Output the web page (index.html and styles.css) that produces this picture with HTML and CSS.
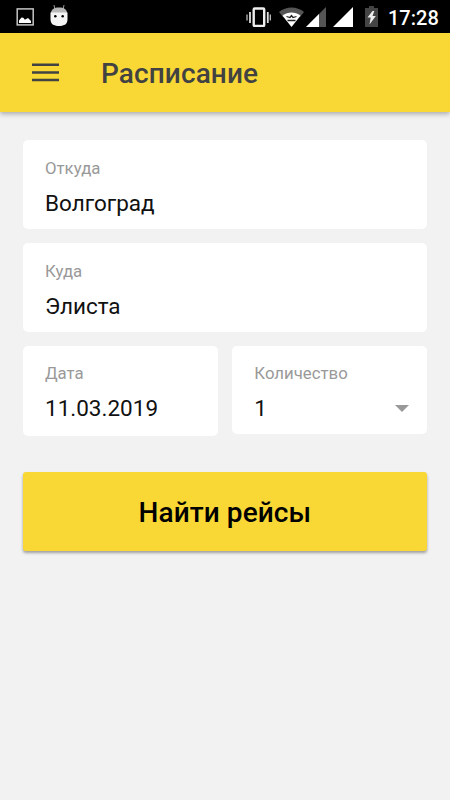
FILE: index.html
```html
<!DOCTYPE html>
<html lang="ru">
<head>
<meta charset="utf-8">
<title>Расписание</title>
<link rel="stylesheet" href="styles.css">
</head>
<body>
<div class="status">
  <div class="status-left">
    <svg width="18" height="18" viewBox="0 0 18 18"><rect x="1.200" y=".9" width="16" height="16" fill="none" stroke="#c4c4c4" stroke-width="1.500"/><path d="M3 15v-2.500l2.500-3 1.800.2 1.600 2 3.100-1.600 3 3V15z" fill="#fff"/></svg>
    <svg width="18" height="22" viewBox="0 0 18 22"><path d="M4.800 4 4 0M13.200 4 14 0" stroke="#999" stroke-width="1"/><path d="M1 8c0-3.500 3-5.500 8-5.500S17 4.500 17 8z" fill="#b8b8b8"/><path d="M.5 7.500h17V14c0 5-3 7-8.500 7S.5 19 .5 14z" fill="#f5f5f5"/><circle cx="5.300" cy="11.300" r="1.250"/><circle cx="12.700" cy="11.300" r="1.250"/></svg>
  </div>
  <div class="status-right">
    <svg class="vibrate" width="26" height="20" viewBox="0 0 26 20"><rect x="8.700" y="1.500" width="10.500" height="17.500" rx="1" fill="none" stroke="#eee" stroke-width="2.400"/><path d="M5 5v11M22.800 5v11" stroke="#ddd" stroke-width="1.800"/><path d="M2 7.500v6M25.300 7.500v6" stroke="#bbb" stroke-width="1.300"/></svg>
    <svg class="wifi" width="26" height="20" viewBox="0 0 26 20"><path d="M0 5C7-1 18-1 25 5L21 10C16 6 9 6 4 10z" fill="#555"/><path d="M3.500 8.800C9 4.500 16 4.500 21.500 8.800L12.500 20z" fill="#fff"/><path d="M7.500 9.500 11 10.500 12.500 8.500l1.500 2 3.500-1M8.500 13.500h8" stroke="#222" stroke-width="1.300" fill="none"/></svg>
    <svg class="signal" width="20" height="20" viewBox="0 0 20 20"><path d="M0 20 20 0v20z" fill="#555"/><path d="M0 20 13 7v13z" fill="#fff"/></svg>
    <svg class="signal-full" width="20" height="20" viewBox="0 0 20 20"><path d="M0 20 20 0v20z" fill="#fff"/></svg>
    <svg class="battery" width="13" height="21" viewBox="0 0 13 21"><path d="M4 0h5v2h4v19H0V2h4z" fill="#444"/><path d="M7.500 5 2.500 11.500h3.200L4.500 18.500 10.800 10H7.500l1.800-5z" fill="#eee"/></svg>
    <span class="clock">17:28</span>
  </div>
</div>
<header class="appbar">
  <svg width="28" height="20" viewBox="0 0 28 20"><path d="M0 1.750h27M0 9.500h27M0 17h27" stroke="#424242" stroke-width="2.600"/></svg>
  <h1>Расписание</h1>
</header>
<main>
  <div class="field"><span class="label">Откуда</span><span class="value">Волгоград</span></div>
  <div class="field"><span class="label">Куда</span><span class="value">Элиста</span></div>
  <div class="row">
    <div class="field date"><span class="label">Дата</span><span class="value">11.03.2019</span></div>
    <div class="field count"><span class="label">Количество</span><span class="value">1<svg width="14" height="7" viewBox="0 0 14 7"><path d="M0 0h14L7 7z" fill="#999"/></svg></span></div>
  </div>
  <button>Найти рейсы</button>
</main>
</body>
</html>
```
FILE: styles.css
```css
* { box-sizing: border-box; }
body { margin: 0; height: 800px; background: #f2f2f2; font-family: Roboto, sans-serif; color: #111; overflow: hidden; }
svg { display: block; flex: none; }
.status { height: 33.4px; background: #000; display: flex; justify-content: space-between; color: #fff; }
.status-left { display: flex; gap: 16px; padding: 5px 0 0 16px; }
.status-left svg:first-child { margin-top: 3px; }
.status-right { display: flex; align-items: flex-start; padding: 7px 11px 0 0; }
.vibrate { margin-right: 8px; }
.signal { margin-left: 1px; }
.signal-full { margin-left: 7px; }
.battery { margin: -1px 10px 0 12px; }
.clock { font-size: 20px; line-height: 22px; font-weight: 500; width: 51px; white-space: nowrap; }
.appbar { height: 78.6px; background: #f9d835; display: flex; align-items: center; padding-left: 31.5px; box-shadow: 0 2px 5px rgba(0,0,0,.3); }
.appbar h1 { margin: 2px 0 0 41.5px; font-size: 28px; line-height: 34px; font-weight: 500; letter-spacing: .1px; color: #424242; }
main { padding: 28.4px 22.8px 0 22.5px; display: flex; flex-direction: column; gap: 14px; }
.field { height: 88.6px; border-radius: 5px; background: #fff; padding: 16.6px 18px 0 22.5px; display: flex; flex-direction: column; }
.label { font-size: 16.8px; line-height: 22px; color: #999; }
.value { font-size: 22.5px; line-height: 30px; margin-top: 9px; display: flex; align-items: center; justify-content: space-between; }
.row { display: grid; grid-template-columns: 1fr 1fr; gap: 14px; align-items: start; }
.date { height: 90px; }
button { height: 79px; margin-top: 22.3px; border: 0; border-radius: 3px; background: #f9d835; box-shadow: 0 2px 3px rgba(0,0,0,.35); font: 500 28px/34px Roboto, sans-serif; letter-spacing: .08px; color: #000; padding: 3px 0 0; }
```
